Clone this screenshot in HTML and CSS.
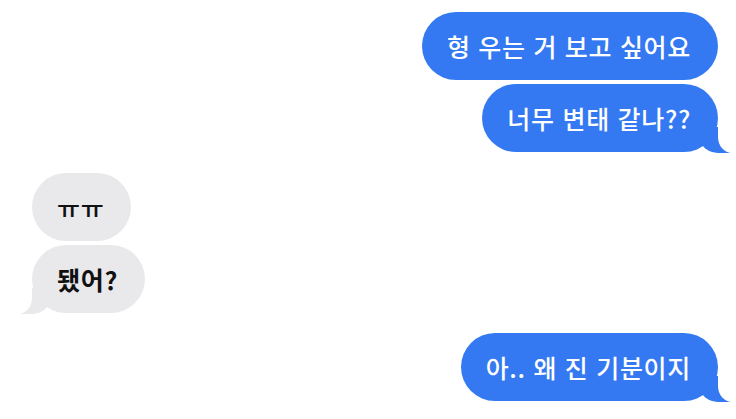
FILE: index.html
```html
<!DOCTYPE html>
<html lang="ko">
<head>
<meta charset="utf-8">
<link rel="stylesheet" href="styles.css">
</head>
<body>
<div class="chat">
  <div class="bubble sent">형 우는 거 보고 싶어요</div>
  <div class="bubble sent tail gap-s">너무 변태 같나??</div>
  <div class="bubble recv gap-l">ㅠㅠ</div>
  <div class="bubble recv tail gap-s bold">됐어?</div>
  <div class="bubble sent tail gap-m">아.. 왜 진 기분이지</div>
</div>
</body>
</html>
```
FILE: styles.css
```css
html, body {
  margin: 0;
  padding: 0;
  background: #ffffff;
}
.chat {
  width: 736px;
  height: 419px;
  box-sizing: border-box;
  padding: 12px 18px 0 32px;
  display: flex;
  flex-direction: column;
  font-family: "Noto Sans CJK KR", "Noto Sans", sans-serif;
  overflow: hidden;
}
.bubble {
  position: relative;
  font-size: 25px;
  line-height: 34px;
  font-weight: 500;
  letter-spacing: 0.7px;
  padding: 17px 27px 17px 25px;
  border-radius: 34px;
  white-space: nowrap;
}
.sent {
  align-self: flex-end;
  background: #3479f2;
  color: #ffffff;
}
.recv {
  align-self: flex-start;
  background: #e9e9eb;
  color: #111111;
}
.bold { font-weight: 700; }
.gap-s { margin-top: 4px; }
.gap-m { margin-top: 20px; }
.gap-l { margin-top: 21px; }
.tail::before,
.tail::after {
  content: "";
  position: absolute;
  bottom: -1px;
  height: 26px;
}
.sent.tail::before {
  right: -12px;
  width: 30px;
  background: #3479f2;
  border-bottom-left-radius: 18px 15px;
}
.sent.tail::after {
  right: -16px;
  width: 16px;
  background: #ffffff;
  border-bottom-left-radius: 14px 16px;
}
.recv.tail::before {
  left: -12px;
  width: 30px;
  background: #e9e9eb;
  border-bottom-right-radius: 18px 15px;
}
.recv.tail::after {
  left: -16px;
  width: 16px;
  background: #ffffff;
  border-bottom-right-radius: 14px 16px;
}
```
